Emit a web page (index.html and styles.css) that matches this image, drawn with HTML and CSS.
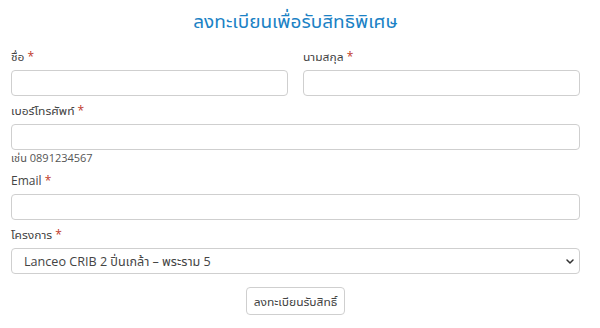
FILE: index.html
```html
<!DOCTYPE html>
<html>
<head>
  <meta charset="utf-8">
  <title>ลงทะเบียนเพื่อรับสิทธิพิเศษ</title>
  <link rel="stylesheet" href="styles.css">
</head>
<body>
  <form class="register-form">
    <h1 class="form-title">ลงทะเบียนเพื่อรับสิทธิพิเศษ</h1>

    <div class="form-row">
      <div class="form-group">
        <label>ชื่อ <span class="required">*</span></label>
        <input type="text" class="form-control">
      </div>
      <div class="form-group">
        <label>นามสกุล <span class="required">*</span></label>
        <input type="text" class="form-control">
      </div>
    </div>

    <div class="form-group">
      <label>เบอร์โทรศัพท์ <span class="required">*</span></label>
      <input type="tel" class="form-control">
      <small class="help-text">เช่น 0891234567</small>
    </div>

    <div class="form-group">
      <label>Email <span class="required">*</span></label>
      <input type="email" class="form-control">
    </div>

    <div class="form-group">
      <label>โครงการ <span class="required">*</span></label>
      <div class="select-wrap">
        <select class="form-control project-select">
          <option>Lanceo CRIB 2 ปิ่นเกล้า – พระราม 5</option>
        </select>
        <svg class="select-arrow" width="8" height="5" viewBox="0 0 8 5">
          <path d="M1 1l3 3 3-3" fill="none" stroke="#333" stroke-width="1.5" stroke-linecap="round" stroke-linejoin="round"/>
        </svg>
      </div>
    </div>

    <div class="form-actions">
      <button type="button" class="btn">ลงทะเบียนรับสิทธิ์</button>
    </div>
  </form>
</body>
</html>
```

FILE: styles.css
```css
body {
  margin: 0;
  padding: 0;
  background-color: #fff;
  color: #444;
  font-family: "Open Sans", "Noto Sans Thai UI", "Noto Sans Thai", "Noto Sans", sans-serif;
  font-size: 12px;
}
.register-form {
  padding: 8px 20px 0 11px;
}
.form-title {
  margin: 0 0 14px;
  font-size: 19px;
  line-height: 26px;
  font-weight: normal;
  text-align: center;
  color: #1b82c5;
}
.form-row {
  display: grid;
  grid-template-columns: 1fr 1fr;
  gap: 15px;
}
.form-group {
  display: flex;
  flex-direction: column;
  margin-bottom: 6px;
}
.form-group label {
  line-height: 18px;
  margin-bottom: 4px;
}
.required {
  color: #c0392b;
}
.form-control {
  box-sizing: border-box;
  width: 100%;
  height: 26px;
  margin: 0;
  padding: 0 12px;
  border: 1px solid #cfcfcf;
  border-radius: 4px;
  background-color: #fff;
  font-family: inherit;
  font-size: 12px;
  color: #444;
}
.project-select {
  font-size: 12.6px;
}
.help-text {
  font-size: 11px;
  line-height: 16px;
  color: #555;
}
.select-wrap {
  position: relative;
}
.select-wrap select {
  appearance: none;
  -webkit-appearance: none;
}
.select-arrow {
  position: absolute;
  right: 6px;
  top: 11px;
}
.form-actions {
  display: flex;
  justify-content: center;
  margin-top: 13px;
}
.btn {
  height: 28px;
  padding: 0 7px;
  border: 1px solid #cfcfcf;
  border-radius: 4px;
  background-color: #fff;
  font-family: inherit;
  font-size: 12px;
  color: #444;
  cursor: pointer;
}
```
